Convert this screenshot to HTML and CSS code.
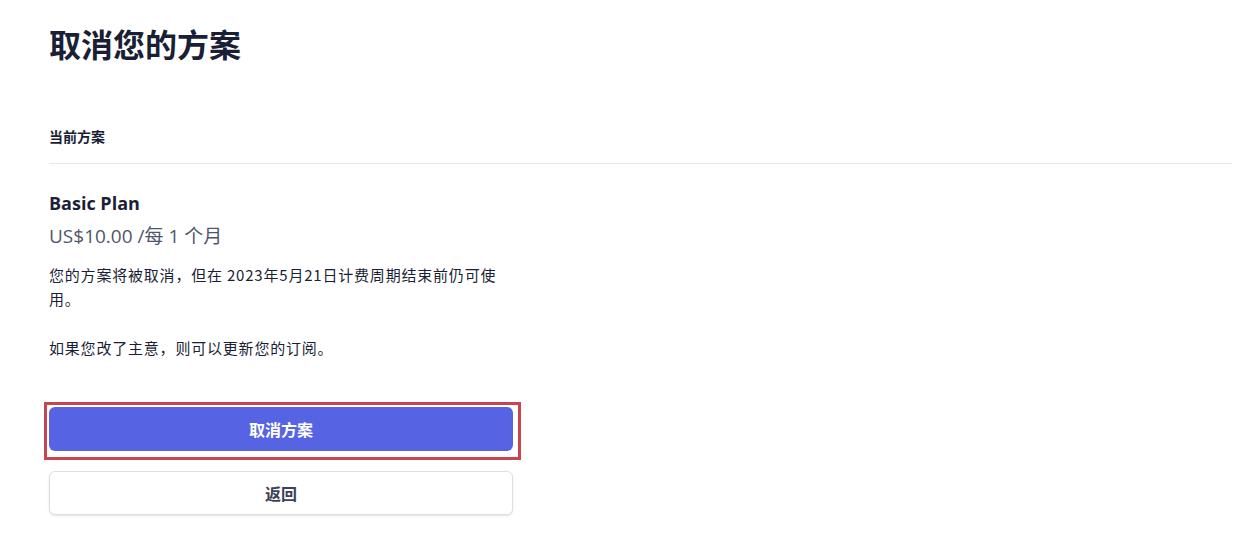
FILE: index.html
```html
<!doctype html>
<html lang="zh-CN">
  <head>
    <meta charset="UTF-8" />
    <meta name="viewport" content="width=device-width, initial-scale=1.0" />
    <title>取消您的方案</title>
    <link rel="stylesheet" href="styles.css">
  </head>
  <body>
    <main class="page">
      <h1>取消您的方案</h1>

      <!-- Current plan section -->
      <section class="plan-section">
        <h2 class="section-title">当前方案</h2>

        <div class="plan-info">
          <div class="plan-name">Basic Plan</div>
          <div class="plan-price">US$10.00 /每 1 个月</div>
          <p class="plan-note">您的方案将被取消，但在 2023年5月21日计费周期结束前仍可使用。</p>
          <p class="plan-note second">如果您改了主意，则可以更新您的订阅。</p>
        </div>

        <!-- Actions -->
        <div class="actions">
          <button id="cancelPlanButton" class="btn primary">取消方案</button>
          <button id="backButton" class="btn secondary">返回</button>
        </div>
      </section>
    </main>
  </body>
</html>
```

FILE: styles.css
```css
body {
  margin: 0;
  background: #ffffff;
  color: #1a1f36;
  font-family: 'Open Sans', 'Noto Sans CJK SC', sans-serif;
}

.page {
  padding: 25px 4px 30px 49px;
}

h1 {
  margin: 0;
  font-size: 32px;
  line-height: 40px;
  font-weight: 700;
  color: #1a1f36;
}

.plan-section {
  margin-top: 62px;
}

.section-title {
  margin: 0;
  padding-bottom: 16px;
  font-size: 14px;
  line-height: 20px;
  font-weight: 700;
  color: #1a1f36;
  border-bottom: 1px solid #e3e8ee;
}

/* Plan details */
.plan-info {
  width: 464px;
  margin-top: 26px;
}

.plan-name {
  font-size: 18px;
  line-height: 26px;
  font-weight: 700;
}

.plan-price {
  margin-top: 6px;
  font-size: 19px;
  line-height: 28px;
  color: #4f566b;
}

.plan-note {
  margin: 13px 0 0 0;
  font-family: 'Noto Sans CJK SC', sans-serif;
  font-size: 15px;
  line-height: 24px;
  letter-spacing: 0.8px;
  color: #1a1f36;
}

.plan-note.second {
  margin-top: 25px;
}

/* Buttons */
.actions {
  display: flex;
  flex-direction: column;
  gap: 20px;
  width: 464px;
  margin-top: 47px;
}

.btn {
  height: 44px;
  border-radius: 6px;
  font-family: inherit;
  font-size: 16px;
  font-weight: 700;
  cursor: pointer;
}

.btn.primary {
  position: relative;
  background: #5664e4;
  color: #ffffff;
  border: none;
}

/* red highlight frame drawn round the cancel button */
.btn.primary:after {
  content: '';
  position: absolute;
  top: -5px;
  left: -5px;
  right: -8px;
  bottom: -9px;
  border: 3px solid #c9454d;
  pointer-events: none;
}

.btn.secondary {
  background: #ffffff;
  color: #3c4257;
  border: 1px solid #dcdfe4;
  box-shadow: 0 1px 2px rgba(60, 66, 87, 0.15);
}
```
